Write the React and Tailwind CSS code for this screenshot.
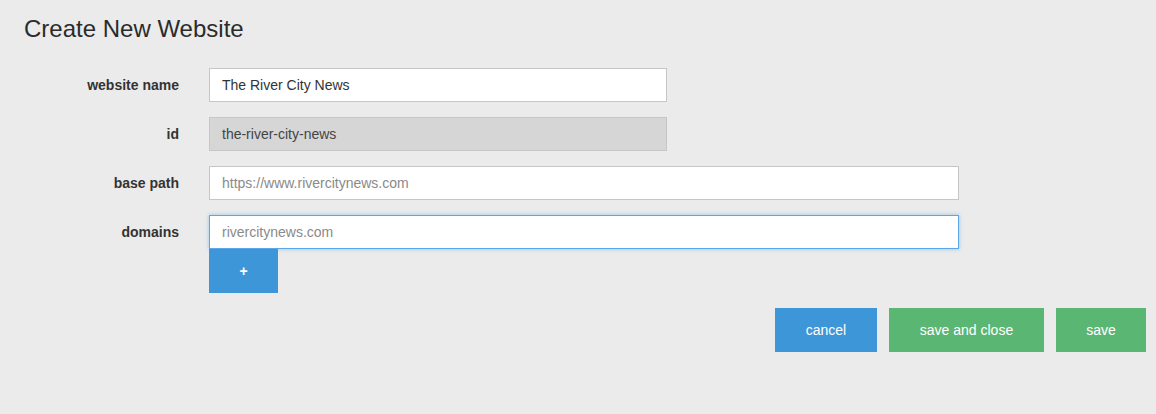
import React from 'react';

const fields = [
  { label: 'website name', value: 'The River City News', width: 'w-[458px]' },
  { label: 'id', value: 'the-river-city-news', width: 'w-[458px]', readOnly: true },
  { label: 'base path', placeholder: 'https://www.rivercitynews.com', width: 'w-[750px]' },
];

const App = () => {
  return (
    <div className="min-h-[414px] bg-[#ebebeb] text-[#333] font-['Liberation_Sans',Arial,sans-serif]">
      <h1 className="px-6 pt-[14px] text-[24px] leading-[30px] font-normal text-[#2b2b2b]">Create New Website</h1>

      <form className="mt-[24px] flex flex-col gap-[15px]" onSubmit={(e) => e.preventDefault()}>
        {fields.map((f) => (
          <div key={f.label} className="flex items-center">
            <label className="w-[179px] shrink-0 text-right text-[14px] font-bold text-[#333]">{f.label}</label>
            <input
              className={`${f.width} ml-[30px] h-[34px] border border-[#c6c6c6] px-3 text-[14px] outline-none placeholder:text-[#8a8a8a] ${
                f.readOnly ? 'bg-[#d6d6d6] text-[#444]' : 'bg-white text-[#333]'
              }`}
              defaultValue={f.value}
              placeholder={f.placeholder}
              readOnly={f.readOnly}
            />
          </div>
        ))}

        <div className="flex items-start">
          <label className="w-[179px] shrink-0 pt-[7px] text-right text-[14px] font-bold text-[#333]">domains</label>
          <div className="ml-[30px] flex flex-col">
            <input
              className="w-[750px] h-[34px] border border-[#5aa8e8] bg-white px-3 text-[14px] outline-none shadow-[0_0_4px_rgba(90,168,232,0.6)] placeholder:text-[#8a8a8a]"
              placeholder="rivercitynews.com"
            />
            <button type="button" className="w-[69px] h-[44px] bg-[#3d96d8] text-white text-[14px] font-bold">
              +
            </button>
          </div>
        </div>
      </form>

      <div className="mt-[15px] flex justify-end gap-[12px] pr-[10px]">
        <button className="w-[102px] h-[44px] bg-[#3d96d8] text-white text-[14px]">cancel</button>
        <button className="w-[155px] h-[44px] bg-[#5ab673] text-white text-[14px]">save and close</button>
        <button className="w-[90px] h-[44px] bg-[#5ab673] text-white text-[14px]">save</button>
      </div>
    </div>
  );
};

export default App;
